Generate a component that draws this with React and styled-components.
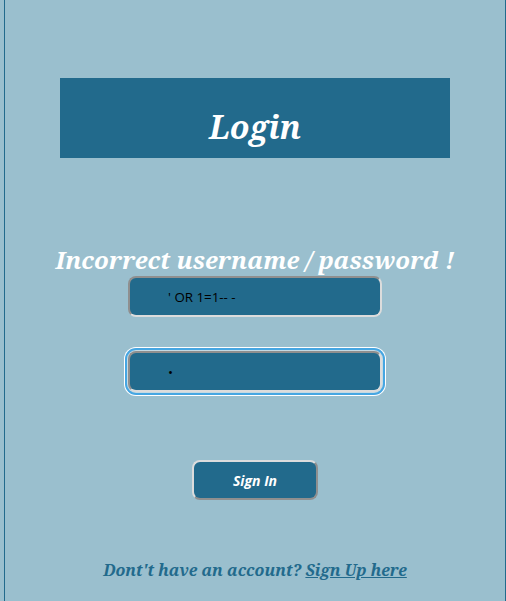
import React from "react";
import styled, { createGlobalStyle } from "styled-components";

const GlobalStyle = createGlobalStyle`
  html, body { margin: 0; padding: 0; background: #9abfce; }
  body { font-family: "Noto Serif", "DejaVu Serif", serif; }
`;

const Page = styled.div`
  box-sizing: border-box;
  margin-left: 4px;
  width: 502px;
  min-height: 601px;
  border-left: 1px solid #226a8c;
  border-right: 1px solid #226a8c;
  background: #9abfce;
  display: flex;
  flex-direction: column;
  align-items: center;
  padding-top: 78px;
`;

const Header = styled.div`
  width: 390px;
  height: 80px;
  background: #226a8c;
  display: flex;
  align-items: center;
  justify-content: center;
  box-sizing: border-box;
  padding-top: 16px;
`;

const Title = styled.h1`
  margin: 0;
  color: #ffffff;
  font-family: "Noto Serif", "DejaVu Serif", serif;
  font-style: italic;
  font-weight: 700;
  font-size: 32px;
`;

const Error = styled.h2`
  margin: 86px 0 0;
  color: #ffffff;
  font-family: "Noto Serif", "DejaVu Serif", serif;
  font-style: italic;
  font-weight: 700;
  font-size: 24px;
  line-height: 32px;
  white-space: nowrap;
`;

const Form = styled.form`
  display: flex;
  flex-direction: column;
  align-items: center;
`;

const Field = styled.input`
  box-sizing: border-box;
  width: 254px;
  height: 41px;
  margin-top: ${(p) => p.$gap}px;
  background: #226a8c;
  border: 2px solid;
  border-color: #8f8f8f #dcdcdc #dcdcdc #8f8f8f;
  border-radius: 8px;
  padding: 0 0 0 38px;
  font-family: "Open Sans", "Noto Sans", sans-serif;
  font-size: 13.33px;
  color: #000;
  outline: none;
  box-shadow: ${(p) =>
    p.$focused ? "0 0 0 1px #c4d9e3, 0 0 0 3px #46a6e2, 0 0 0 4px #ffffff" : "none"};
`;

const Button = styled.button`
  box-sizing: border-box;
  margin-top: 68px;
  width: 126px;
  height: 40px;
  background: #226a8c;
  border: 2px solid;
  border-color: #dcdcdc #8f8f8f #8f8f8f #dcdcdc;
  border-radius: 8px;
  color: #ffffff;
  font-family: "Open Sans", "Noto Sans", sans-serif;
  font-style: italic;
  font-weight: 700;
  font-size: 14px;
  cursor: pointer;
`;

const Footer = styled.p`
  margin: 59px 0 0;
  color: #226a8c;
  font-family: "Noto Serif", "DejaVu Serif", serif;
  font-style: italic;
  font-weight: 700;
  font-size: 16px;
`;

const SignUp = styled.a`
  color: #226a8c;
  text-decoration: underline;
`;

export default function App() {
  return (
    <>
      <GlobalStyle />
      <Page>
        <Header>
          <Title>Login</Title>
        </Header>
        <Error>Incorrect username / password !</Error>
        <Form onSubmit={(e) => e.preventDefault()}>
          <Field $gap={0} type="text" defaultValue="' OR 1=1-- -" />
          <Field $gap={34} $focused type="password" defaultValue="a" />
          <Button type="submit">Sign In</Button>
        </Form>
        <Footer>
          Dont't have an account? <SignUp href="#">Sign Up here</SignUp>
        </Footer>
      </Page>
    </>
  );
}
